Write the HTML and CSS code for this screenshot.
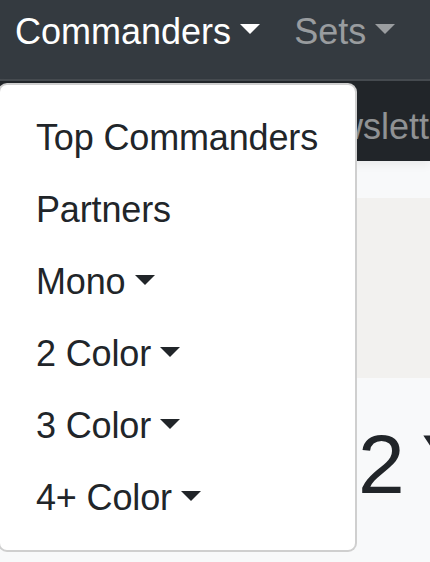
FILE: index.html
```html
<!DOCTYPE html>
<html lang="en">
<head>
<meta charset="utf-8">
<title>Commanders</title>
<link rel="stylesheet" href="styles.css">
</head>
<body>
<header class="topbar">
  <nav class="mainnav">
    <div class="nav-item">
      <a class="nav-link active" href="#">Commanders<span class="caret"></span></a>
      <div class="dropdown-menu">
        <a class="dropdown-item" href="#">Top Commanders</a>
        <a class="dropdown-item" href="#">Partners</a>
        <a class="dropdown-item" href="#">Mono<span class="caret"></span></a>
        <a class="dropdown-item" href="#">2 Color<span class="caret"></span></a>
        <a class="dropdown-item" href="#">3 Color<span class="caret"></span></a>
        <a class="dropdown-item" href="#">4+ Color<span class="caret"></span></a>
      </div>
    </div>
    <a class="nav-link" href="#">Sets<span class="caret"></span></a>
  </nav>
</header>
<div class="subbar">
  <a class="sub-link" href="#">Newsletter</a>
</div>
<main class="content">
  <div class="banner"></div>
  <h1 class="title">2 Years</h1>
</main>
</body>
</html>
```
FILE: styles.css
```css
html, body {
  margin: 0;
  padding: 0;
}
body {
  width: 430px;
  height: 562px;
  overflow: hidden;
  background: #f8f9fa;
  font-family: "Liberation Sans", Arial, Helvetica, sans-serif;
  color: #212529;
}
a {
  text-decoration: none;
}
.topbar {
  height: 79px;
  background: #343a40;
  border-bottom: 2px solid #464b50;
}
.mainnav {
  display: flex;
  gap: 34px;
  padding: 4.5px 0 0 15px;
}
.nav-link {
  display: block;
  font-size: 36px;
  line-height: 54px;
  color: rgba(255, 255, 255, 0.5);
  white-space: nowrap;
}
.nav-link.active {
  color: #fff;
}
.caret {
  display: inline-block;
  margin-left: 0.255em;
  vertical-align: 0.255em;
  border-top: 0.3em solid;
  border-right: 0.3em solid transparent;
  border-left: 0.3em solid transparent;
  border-bottom: 0;
}
.dropdown-menu {
  position: absolute;
  top: 83px;
  left: -2px;
  width: 355px;
  padding: 17px 0 16px;
  background: #fff;
  border: 2px solid rgba(0, 0, 0, 0.19);
  border-radius: 9px;
  display: flex;
  flex-direction: column;
  z-index: 10;
}
.dropdown-item {
  display: block;
  padding: 9px 36px;
  font-size: 36px;
  line-height: 54px;
  letter-spacing: -0.15px;
  color: #212529;
  white-space: nowrap;
}
.subbar {
  box-sizing: border-box;
  height: 80px;
  padding: 19px 0 0 291px;
  background: #212529;
  box-shadow: 0 4px 9px rgba(0, 0, 0, 0.06);
  position: relative;
  white-space: nowrap;
  overflow: hidden;
}
.sub-link {
  font-size: 36px;
  line-height: 54px;
  color: rgba(255, 255, 255, 0.5);
}
.content {
  padding-top: 37px;
}
.banner {
  height: 180px;
  background: #f2f1ef;
}
.title {
  margin: 35.5px 0 0;
  padding-left: 358px;
  font-size: 84px;
  font-weight: 500;
  line-height: 1.2;
  letter-spacing: -1px;
  word-spacing: -3px;
  color: #212529;
  white-space: nowrap;
  overflow: hidden;
}
```
